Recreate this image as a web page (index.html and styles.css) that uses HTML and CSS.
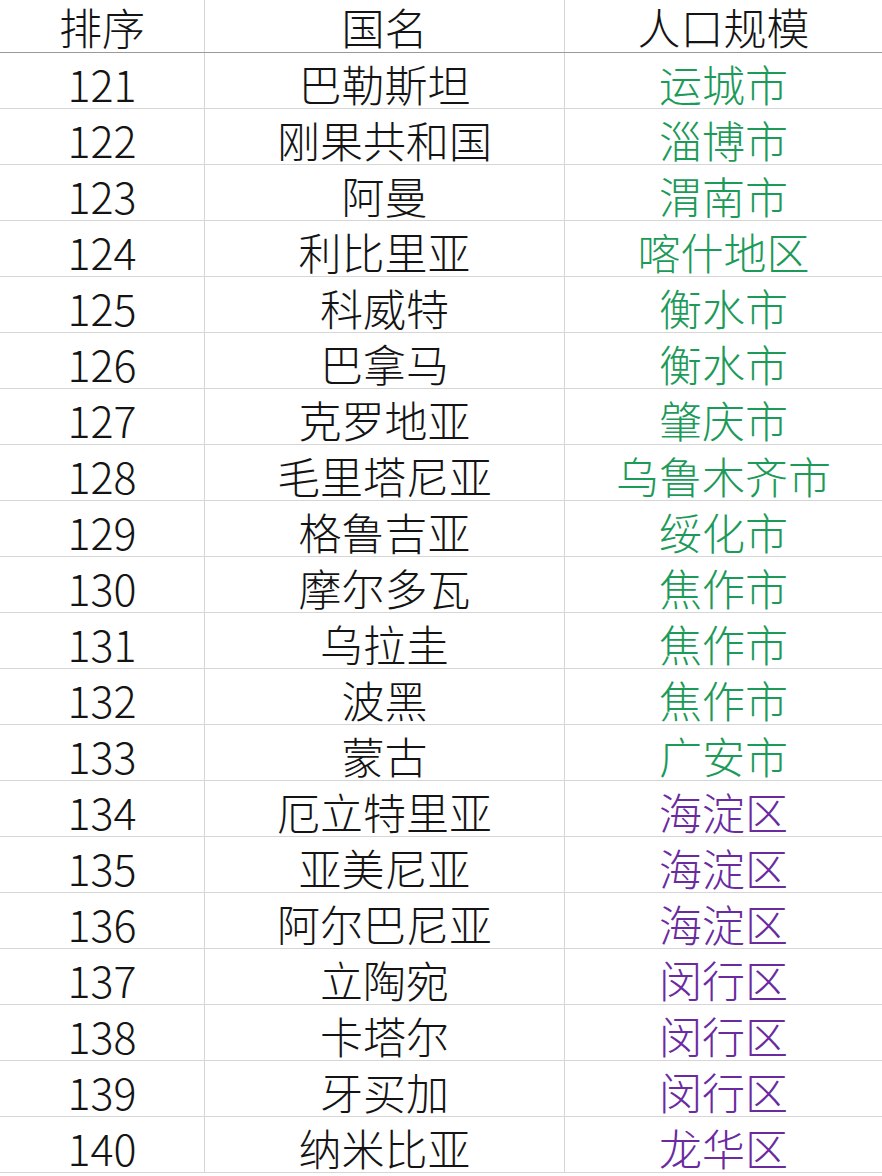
FILE: index.html
```html
<!DOCTYPE html>
<html lang="zh-CN">
<head>
<meta charset="utf-8">
<link rel="stylesheet" href="styles.css">
</head>
<body>
<div class="sheet">
  <div class="row head"><div class="c c1">排序</div><div class="c c2">国名</div><div class="c c3">人口规模</div></div>
  <div class="row"><div class="c c1">121</div><div class="c c2">巴勒斯坦</div><div class="c c3 g">运城市</div></div>
  <div class="row"><div class="c c1">122</div><div class="c c2">刚果共和国</div><div class="c c3 g">淄博市</div></div>
  <div class="row"><div class="c c1">123</div><div class="c c2">阿曼</div><div class="c c3 g">渭南市</div></div>
  <div class="row"><div class="c c1">124</div><div class="c c2">利比里亚</div><div class="c c3 g">喀什地区</div></div>
  <div class="row"><div class="c c1">125</div><div class="c c2">科威特</div><div class="c c3 g">衡水市</div></div>
  <div class="row"><div class="c c1">126</div><div class="c c2">巴拿马</div><div class="c c3 g">衡水市</div></div>
  <div class="row"><div class="c c1">127</div><div class="c c2">克罗地亚</div><div class="c c3 g">肇庆市</div></div>
  <div class="row"><div class="c c1">128</div><div class="c c2">毛里塔尼亚</div><div class="c c3 g">乌鲁木齐市</div></div>
  <div class="row"><div class="c c1">129</div><div class="c c2">格鲁吉亚</div><div class="c c3 g">绥化市</div></div>
  <div class="row"><div class="c c1">130</div><div class="c c2">摩尔多瓦</div><div class="c c3 g">焦作市</div></div>
  <div class="row"><div class="c c1">131</div><div class="c c2">乌拉圭</div><div class="c c3 g">焦作市</div></div>
  <div class="row"><div class="c c1">132</div><div class="c c2">波黑</div><div class="c c3 g">焦作市</div></div>
  <div class="row"><div class="c c1">133</div><div class="c c2">蒙古</div><div class="c c3 g">广安市</div></div>
  <div class="row"><div class="c c1">134</div><div class="c c2">厄立特里亚</div><div class="c c3 p">海淀区</div></div>
  <div class="row"><div class="c c1">135</div><div class="c c2">亚美尼亚</div><div class="c c3 p">海淀区</div></div>
  <div class="row"><div class="c c1">136</div><div class="c c2">阿尔巴尼亚</div><div class="c c3 p">海淀区</div></div>
  <div class="row"><div class="c c1">137</div><div class="c c2">立陶宛</div><div class="c c3 p">闵行区</div></div>
  <div class="row"><div class="c c1">138</div><div class="c c2">卡塔尔</div><div class="c c3 p">闵行区</div></div>
  <div class="row"><div class="c c1">139</div><div class="c c2">牙买加</div><div class="c c3 p">闵行区</div></div>
  <div class="row"><div class="c c1">140</div><div class="c c2">纳米比亚</div><div class="c c3 p">龙华区</div></div>
</div>
</body>
</html>
```
FILE: styles.css
```css
html, body {
  margin: 0;
  padding: 0;
  background: #ffffff;
}
.sheet {
  width: 882px;
  font-family: "Noto Sans CJK SC", "Liberation Sans", sans-serif;
  font-size: 43px;
  font-weight: 300;
  color: #141414;
}
.row {
  display: grid;
  grid-template-columns: 205px 360px 317px;
  height: 56px;
  box-sizing: border-box;
  border-bottom: 1px solid #d6d6d6;
}
.row.head {
  height: 53px;
  border-bottom: 1px solid #9a9a9a;
}
.c {
  display: flex;
  align-items: center;
  justify-content: center;
  line-height: 1;
  padding-top: 5px;
  box-sizing: border-box;
  white-space: nowrap;
}
.head .c {
  padding-top: 0;
}
.c1, .c2 {
  border-right: 1px solid #d6d6d6;
}
.g { color: #1c9a58; }
.p { color: #6a2aa0; }
```
